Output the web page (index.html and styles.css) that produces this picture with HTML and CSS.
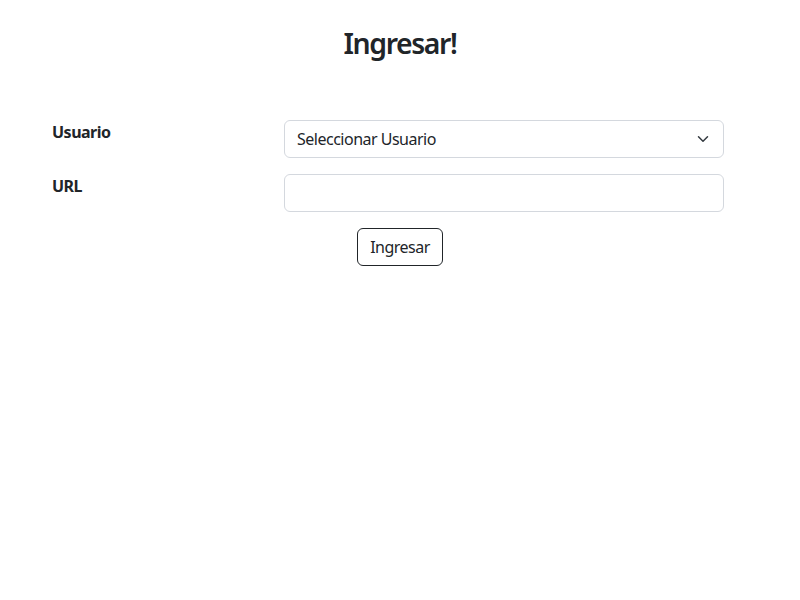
FILE: index.html
```html
<!DOCTYPE html>
<html lang="es">
<head>
<meta charset="utf-8">
<title>Ingresar</title>
<link rel="stylesheet" href="styles.css">
</head>
<body>
<h2 class="title">Ingresar!</h2>
<form class="login-form">
  <div class="form-row">
    <label class="form-label" for="usuario">Usuario</label>
    <div class="form-control-wrap">
      <div class="select-box" id="usuario">
        <span class="select-text">Seleccionar Usuario</span>
        <svg class="chevron" width="16" height="12" viewBox="0 0 16 16"><path fill="none" stroke="#343a40" stroke-linecap="round" stroke-linejoin="round" stroke-width="2" d="m2 5 6 6 6-6"/></svg>
      </div>
    </div>
  </div>
  <div class="form-row">
    <label class="form-label" for="url">URL</label>
    <div class="form-control-wrap">
      <input class="text-input" id="url" type="text">
    </div>
  </div>
  <div class="button-row">
    <button class="btn" type="button">Ingresar</button>
  </div>
</form>
</body>
</html>
```
FILE: styles.css
```css
html, body {
  margin: 0;
  padding: 0;
  background: #fff;
}
body {
  font-family: "Noto Sans", "Open Sans", sans-serif;
  font-size: 16px;
  line-height: 1.5;
  color: #212529;
  letter-spacing: -0.5px;
}
.title {
  margin: 26px 0 0;
  text-align: center;
  font-size: 28.4px;
  font-weight: 600;
  line-height: 1.2;
  letter-spacing: -1.4px;
}
.login-form {
  margin: 60px 0 0 52px;
  width: 672px;
  display: flex;
  flex-direction: column;
  gap: 16px;
}
.form-row {
  display: flex;
}
.form-label {
  width: 232px;
  font-weight: 700;
}
.form-control-wrap {
  flex: 1;
}
.select-box, .text-input {
  box-sizing: border-box;
  width: 100%;
  height: 38px;
  border: 1px solid #d4d8de;
  border-radius: 6px;
  background: #fff;
}
.select-box {
  display: flex;
  align-items: center;
  justify-content: space-between;
  padding: 0 12px;
}
.select-text {
  font-size: 16px;
}
.chevron {
  display: block;
}
.text-input {
  display: block;
  font: inherit;
  padding: 6px 12px;
}
.button-row {
  display: flex;
  justify-content: center;
  margin-left: -52px;
  width: 800px;
}
.btn {
  font: inherit;
  letter-spacing: -0.5px;
  color: #212529;
  background: #fff;
  border: 1px solid #212529;
  border-radius: 6px;
  padding: 6px 12px;
  line-height: 1.5;
}
```
